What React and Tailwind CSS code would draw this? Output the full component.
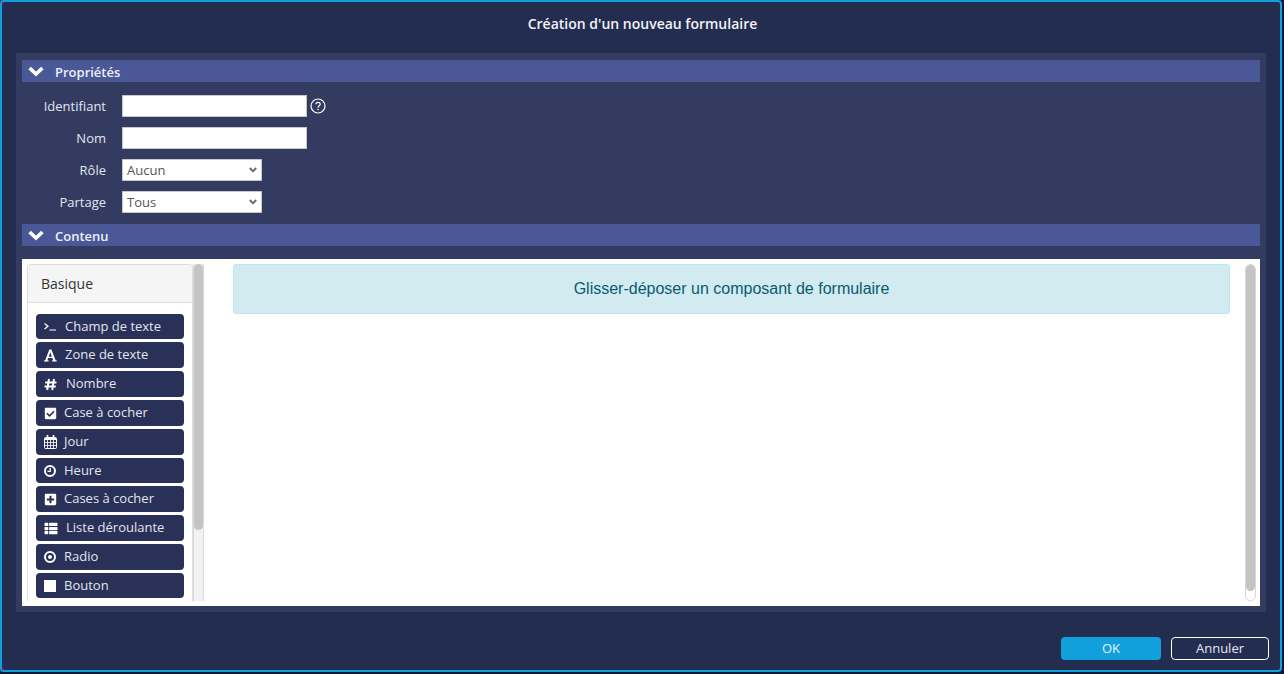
import { FaCheckSquare, FaPlusSquare, FaThList } from "react-icons/fa";

const TerminalIcon = () => (
  <svg width="12" height="10" viewBox="0 0 12 10" fill="none" stroke="#fff" strokeWidth="1.2">
    <path d="M0.5 1.5 L4 4.2 L0.5 7" />
    <path d="M5.5 8 H12" />
  </svg>
);
const FontIcon = () => (
  <svg width="13" height="13" viewBox="0 0 13 13" fill="#fff">
    <path fillRule="evenodd" d="M0 12.5 V11.6 L1.2 11.3 L5.3 0.5 H7.4 L11.6 11.3 L12.8 11.6 V12.5 H8 V11.6 L9.2 11.3 L8.4 9 H4.2 L3.4 11.3 L4.7 11.6 V12.5 Z M4.7 7.7 H7.9 L6.3 3.3 Z" />
  </svg>
);
const HashIcon = () => (
  <svg width="13" height="13" viewBox="0 0 13 13" fill="none" stroke="#fff" strokeWidth="2">
    <path d="M5 1 L3.2 12 M10 1 L8.2 12 M1.2 4.5 H12.5 M0.5 8.5 H11.8" />
  </svg>
);
const CalendarIcon = () => (
  <svg width="13" height="14" viewBox="0 0 13 14" fill="none" stroke="#fff">
    <rect x="0.5" y="2.5" width="12" height="11" rx="1" />
    <path d="M1 4 H12" strokeWidth="2" />
    <path d="M0.5 7.5 H12.5 M0.5 10.5 H12.5 M3.5 5 V13.5 M6.5 5 V13.5 M9.5 5 V13.5" strokeWidth="0.8" />
    <path d="M3.5 0 V3 M9.5 0 V3" strokeWidth="1.6" />
  </svg>
);
const ClockIcon = () => (
  <svg width="12" height="12" viewBox="0 0 12 12" fill="none" stroke="#fff">
    <circle cx="6" cy="6" r="5" strokeWidth="2" />
    <path d="M6.2 3 V6.4 H3.5" strokeWidth="1.3" />
  </svg>
);
const RadioIcon = () => (
  <svg width="12" height="12" viewBox="0 0 12 12">
    <circle cx="6" cy="6" r="5" fill="none" stroke="#fff" strokeWidth="2" />
    <circle cx="6" cy="6" r="2" fill="#fff" />
  </svg>
);
const StopIcon = () => (
  <svg width="12" height="12" viewBox="0 0 12 12">
    <rect width="12" height="12" fill="#fff" />
  </svg>
);

const composants = [
  { label: "Champ de texte", icon: <TerminalIcon />, gap: "gap-[7px]", h: "h-[25px]" },
  { label: "Zone de texte", icon: <FontIcon />, gap: "gap-[7px]", h: "h-[26px]" },
  { label: "Nombre", icon: <HashIcon />, gap: "gap-[8px]", h: "h-[26px]" },
  { label: "Case à cocher", icon: <FaCheckSquare className="w-[13px] h-[13px]" />, gap: "gap-[6px]", h: "h-[26px]" },
  { label: "Jour", icon: <CalendarIcon />, gap: "gap-[6px]", h: "h-[26px]" },
  { label: "Heure", icon: <ClockIcon />, gap: "gap-[6px]", h: "h-[25px]" },
  { label: "Cases à cocher", icon: <FaPlusSquare className="w-[13px] h-[13px]" />, gap: "gap-[6px]", h: "h-[26px]" },
  { label: "Liste déroulante", icon: <FaThList className="w-[14px] h-[13px]" />, gap: "gap-[8px]", h: "h-[26px]" },
  { label: "Radio", icon: <RadioIcon />, gap: "gap-[6px]", h: "h-[26px]" },
  { label: "Bouton", icon: <StopIcon />, gap: "gap-[6px]", h: "h-[25px]" },
];

function SectionHeader({ title }) {
  return (
    <div className="h-[22px] bg-[#4a5898] flex items-center pl-[6px] gap-[11px] text-[13px] font-semibold text-[#eef0f6]">
      <svg width="16" height="11" viewBox="0 0 16 11" fill="none" stroke="#fff" strokeWidth="3.6">
        <path d="M1.6 2 L8 8 L14.4 2" />
      </svg>
      <span className="pt-[4px]">{title}</span>
    </div>
  );
}

function Field({ label, children }) {
  return (
    <div className="flex items-center h-[22px]">
      <div className="w-[84px] text-right text-[13px] text-[#e3e5ee] pt-[2px]">{label}</div>
      <div className="ml-[16px] flex items-center">{children}</div>
    </div>
  );
}

function Select({ value }) {
  return (
    <div className="w-[140px] h-[22px] bg-white border border-[#c8c8c8] flex items-center justify-between pl-[4px] pr-[4px] text-[13px] text-[#555]">
      <span className="pt-[2px]">{value}</span>
      <svg width="8" height="6" viewBox="0 0 8 6">
        <path d="M0.8 1 L4 4.2 L7.2 1" fill="none" stroke="#666" strokeWidth="1.8" />
      </svg>
    </div>
  );
}

export default function App() {
  return (
    <div className="w-[1284px] h-[674px] bg-[#0c1838] font-['Open_Sans',sans-serif]">
      <div className="w-[1282px] h-[672px] bg-[#232d50] border-2 border-[#12a0dc] rounded-[4px] flex flex-col">
        <div className="h-[44px] shrink-0 flex items-center justify-center pl-[3px] pb-[2px] text-[14px] font-semibold text-[#f2f3f7]">
          Création d'un nouveau formulaire
        </div>
        <div className="mx-[14px] mt-[7px] h-[559px] bg-[#333b60] px-[6px] pt-[7px] pb-[6px] flex flex-col">
          <SectionHeader title="Propriétés" />
          <div className="pt-[13px] flex flex-col gap-[10px]">
            <Field label="Identifiant">
              <div className="w-[185px] h-[22px] bg-white border border-[#c8c8c8]" />
              <svg width="16" height="16" viewBox="0 0 16 16" className="ml-[3px]">
                <circle cx="8" cy="8" r="7" fill="none" stroke="#fff" strokeWidth="1.2" />
                <path d="M5.9 6.3 C5.9 3.7 10.2 3.7 10.2 6.2 C10.2 7.8 8 7.8 8 9.7" fill="none" stroke="#fff" strokeWidth="1.2" />
                <rect x="7.4" y="10.8" width="1.3" height="1.4" fill="#fff" />
              </svg>
            </Field>
            <Field label="Nom">
              <div className="w-[185px] h-[22px] bg-white border border-[#c8c8c8]" />
            </Field>
            <Field label="Rôle">
              <Select value="Aucun" />
            </Field>
            <Field label="Partage">
              <Select value="Tous" />
            </Field>
          </div>
          <div className="mt-[11px]">
            <SectionHeader title="Contenu" />
          </div>
          <div className="mt-[13px] flex-1 min-h-0 bg-white flex pt-[5px] pl-[5px] overflow-hidden">
            <div className="w-[166px] h-[337px] shrink-0 border border-b-0 border-[#dddddd] rounded-t-[4px] flex flex-col overflow-hidden">
              <div className="h-[38px] shrink-0 bg-[#f5f5f5] border-b border-[#dddddd] flex items-center pl-[13px] text-[14px] text-[#333]">
                Basique
              </div>
              <div className="pt-[11px] px-[8px] flex flex-col gap-[3px]">
                {composants.map((c) => (
                  <div key={c.label} className={`${c.h} shrink-0 bg-[#2a3158] rounded-[4px] flex items-center pl-[8px] ${c.gap} text-[13px] text-[#e3e5ee]`}>
                    <span className="w-[14px] flex justify-start shrink-0 text-white">{c.icon}</span>
                    <span>{c.label}</span>
                  </div>
                ))}
              </div>
            </div>
            <div className="w-[11px] h-[337px] shrink-0 bg-[#f1f1f1] border-x border-[#d8d8d8] flex flex-col">
              <div className="h-[266px] bg-[#c4c4c4] rounded-[5px]" />
            </div>
            <div className="ml-[29px] w-[997px] shrink-0 h-[50px] bg-[#d1ebf0] border border-[#bce8f1] rounded-[3px] flex items-center justify-center font-['Liberation_Sans',sans-serif] text-[16px] text-[#0b5a6f]">
              Glisser-déposer un composant de formulaire
            </div>
            <div className="ml-[15px] w-[11px] shrink-0 h-[337px] border border-[#d8d8d8] rounded-[5px] flex flex-col">
              <div className="h-[326px] bg-[#c4c4c4] rounded-[5px]" />
            </div>
          </div>
        </div>
        <div className="flex-1 flex items-center justify-end gap-[10px] pr-[11px] pt-[14px]">
          <div className="w-[100px] h-[23px] pt-[2px] bg-[#12a0dc] rounded-[4px] flex items-center justify-center text-[13px] text-[#e8f4fb]">OK</div>
          <div className="w-[98px] h-[23px] pt-[2px] border border-white rounded-[4px] flex items-center justify-center text-[13px] text-[#e3e5ee]">Annuler</div>
        </div>
      </div>
    </div>
  );
}
